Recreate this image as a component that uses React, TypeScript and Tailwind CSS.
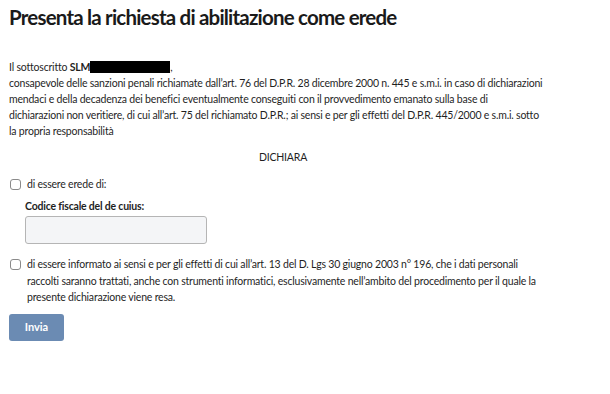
import React from "react";

export default function App() {
  return (
    <div className="w-[610px] h-[394px] bg-white text-[#1a1a1a] font-['Lato',sans-serif] overflow-hidden">
      <div className="pl-[9px] pt-[5px]">
        <h1 className="text-[20.5px] leading-[24px] font-bold tracking-[-0.8px] text-[#1a1a1a]">
          Presenta la richiesta di abilitazione come erede
        </h1>
        <div className="mt-[30px] text-[10.5px] leading-[16px] tracking-[-0.2px] text-[#1f1f1f] w-[560px]">
          <p className="whitespace-nowrap">
            Il sottoscritto <b>SLM</b>
            <span className="inline-block w-[80px] h-[12px] bg-black align-[-2px]"></span>,
          </p>
          <p className="whitespace-nowrap">
            consapevole delle sanzioni penali richiamate dall’art. 76 del D.P.R. 28 dicembre 2000 n. 445 e s.m.i. in caso di dichiarazioni
            <br />
            mendaci e della decadenza dei benefici eventualmente conseguiti con il provvedimento emanato sulla base di
            <br />
            dichiarazioni non veritiere, di cui all’art. 75 del richiamato D.P.R.; ai sensi e per gli effetti del D.P.R. 445/2000 e s.m.i. sotto
            <br />
            la propria responsabilità
          </p>
          <p className="text-center mt-[10px] w-[548px]">DICHIARA</p>
          <label className="flex items-center gap-[6px] mt-[11px] pl-px">
            <span className="w-[11px] h-[11px] border border-[#8a8a8a] rounded-[3px] bg-white shrink-0"></span>
            <span>di essere erede di:</span>
          </label>
          <div className="pl-[16px] mt-[6px]">
            <div className="font-bold">Codice fiscale del de cuius:</div>
            <div className="mt-[2px] w-[182px] h-[28px] border border-[#b5b5b5] rounded-[3px] bg-[#f4f5f7]"></div>
          </div>
          <label className="flex items-start gap-[6px] mt-[12px] pl-px leading-[16.5px]">
            <span className="w-[11px] h-[11px] border border-[#8a8a8a] rounded-[3px] bg-white shrink-0 mt-[3px]"></span>
            <span className="whitespace-nowrap">
              di essere informato ai sensi e per gli effetti di cui all’art. 13 del D. Lgs 30 giugno 2003 n° 196, che i dati personali
              <br />
              raccolti saranno trattati, anche con strumenti informatici, esclusivamente nell’ambito del procedimento per il quale la
              <br />
              presente dichiarazione viene resa.
            </span>
          </label>
          <button className="block mt-[8px] w-[55px] h-[27px] rounded-[3px] bg-[#6b8bb3] text-white font-bold text-[11px] tracking-normal">
            Invia
          </button>
        </div>
      </div>
    </div>
  );
}
